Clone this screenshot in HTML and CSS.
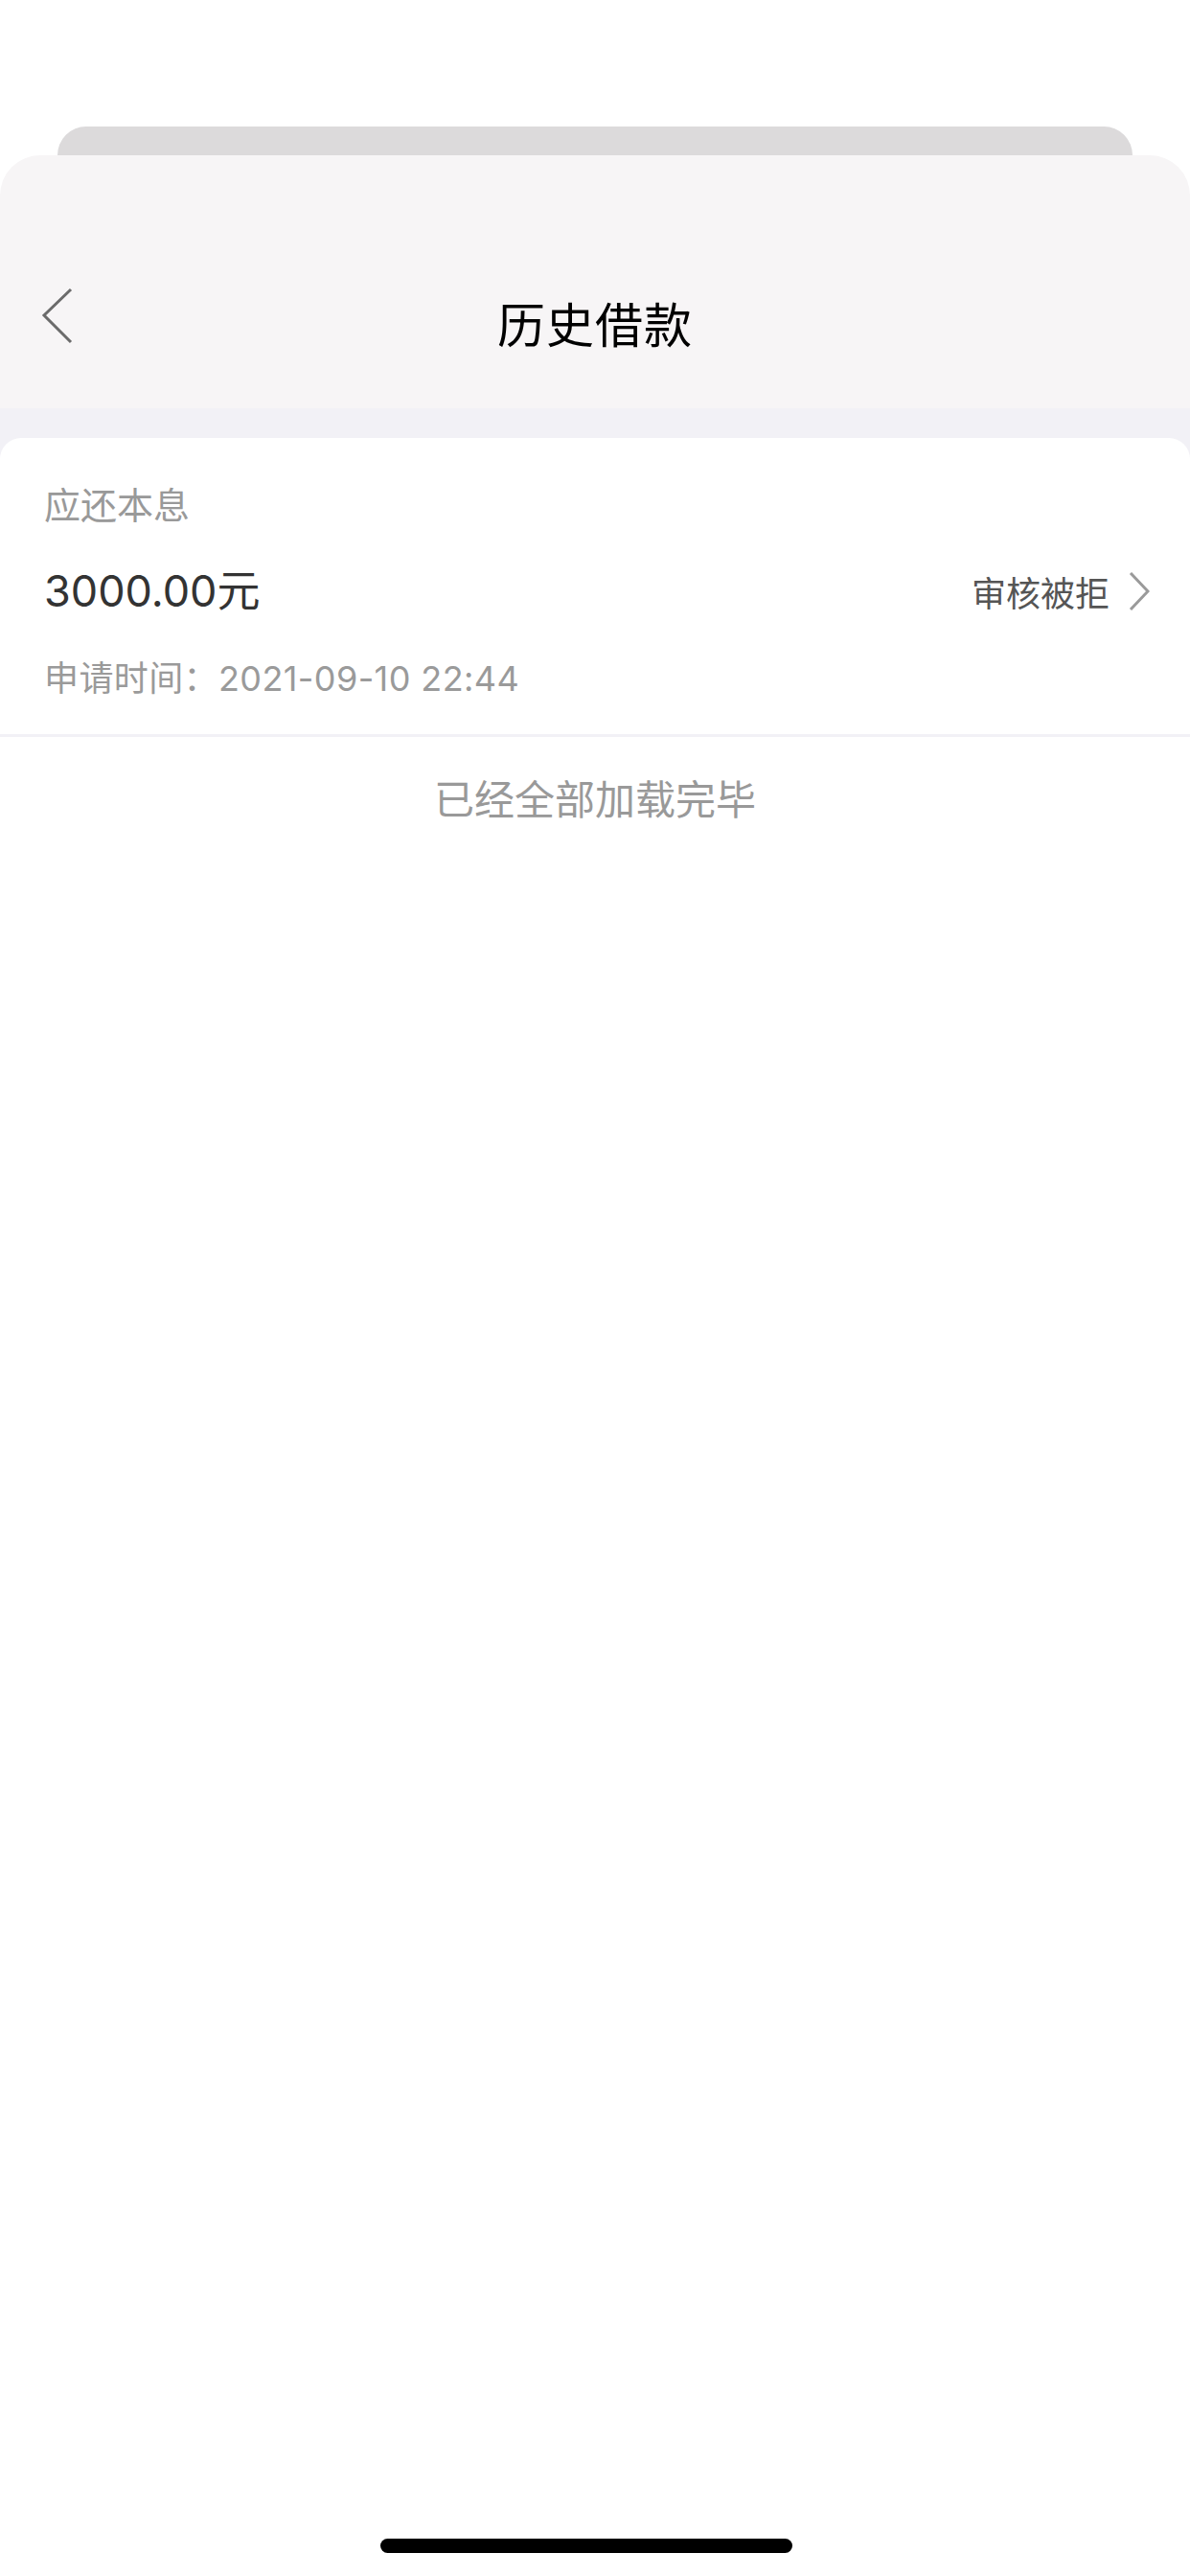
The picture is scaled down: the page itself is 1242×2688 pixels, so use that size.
FILE: index.html
```html
<!DOCTYPE html>
<html lang="zh-CN">
<head>
<meta charset="utf-8">
<title>历史借款</title>
<link rel="stylesheet" href="styles.css">
</head>
<body>
<div class="screen">
  <div class="back-card"></div>
  <div class="sheet">
    <header class="nav">
      <button class="nav-back" aria-label="返回">
        <svg width="34" height="60" viewBox="0 0 34 60"><polyline points="32,2 4,29 32,57" fill="none" stroke="#6b6b6b" stroke-width="3"/></svg>
      </button>
      <h1 class="nav-title">历史借款</h1>
    </header>
    <div class="list">
      <div class="item">
        <div class="item-label">应还本息</div>
        <div class="item-row">
          <div class="item-amount">3000.00元</div>
          <div class="item-status">审核被拒
            <svg class="chev" width="22" height="40" viewBox="0 0 22 40"><polyline points="2,1 20,20 2,39" fill="none" stroke="#9a9a9a" stroke-width="3"/></svg>
          </div>
        </div>
        <div class="item-time">申请时间：2021-09-10 22:44</div>
      </div>
      <div class="end-tip">已经全部加载完毕</div>
    </div>
  </div>
  <div class="home-indicator"></div>
</div>
</body>
</html>
```

FILE: styles.css
```css
html, body {
  margin: 0;
  padding: 0;
  background: #ffffff;
}
body {
  font-family: "Inter", "Noto Sans CJK SC", "Noto Sans", sans-serif;
}
.screen {
  width: 1242px;
  height: 2688px;
  position: relative;
  padding-top: 132px;
  box-sizing: border-box;
  display: flex;
  flex-direction: column;
}
.back-card {
  margin: 0 60px;
  height: 30px;
  background: #dcdadb;
  border-radius: 30px 30px 0 0;
}
.sheet {
  flex: 1;
  display: flex;
  flex-direction: column;
}
.nav {
  background: #f7f5f6;
  border-radius: 42px 42px 0 0;
  height: 264px;
  position: relative;
  display: flex;
  align-items: center;
  justify-content: center;
  padding-top: 84px;
  box-sizing: border-box;
}
.nav-back {
  position: absolute;
  left: 42px;
  top: 138px;
  background: none;
  border: 0;
  padding: 0;
  display: block;
}
.nav-back svg { display: block; }
.nav-title {
  margin: 0;
  font-family: "Noto Sans CJK SC", sans-serif;
  font-size: 50px;
  font-weight: 400;
  color: #000;
  line-height: 1;
  letter-spacing: 1px;
}
.list {
  flex: 1;
  background: #f2f1f6;
  padding-top: 31px;
  display: flex;
  flex-direction: column;
}
.item {
  background: #fff;
  border-radius: 22px 22px 0 0;
  padding: 46px 42px 0 46px;
  height: 312px;
  box-sizing: border-box;
  border-bottom: 3px solid #f2f1f6;
}
.item-label {
  font-size: 38px;
  line-height: 48px;
  color: #999999;
}
.item-row {
  display: flex;
  justify-content: space-between;
  align-items: center;
  margin-top: 38px;
  height: 56px;
}
.item-amount {
  font-size: 45px;
  color: #333333;
  line-height: 56px;
}
.item-status {
  font-size: 36px;
  color: #555555;
  display: flex;
  align-items: center;
  gap: 20px;
}
.chev { display: block; }
.item-time {
  margin-top: 40px;
  font-size: 36px;
  line-height: 46px;
  color: #9a9a9a;
  letter-spacing: 0.4px;
}
.end-tip {
  flex: 1;
  background: #fff;
  text-align: center;
  font-size: 42px;
  line-height: 48px;
  color: #999999;
  padding-top: 42px;
}
.home-indicator {
  position: absolute;
  left: 397px;
  top: 2649px;
  width: 430px;
  height: 15px;
  border-radius: 8px;
  background: #000;
}
```
